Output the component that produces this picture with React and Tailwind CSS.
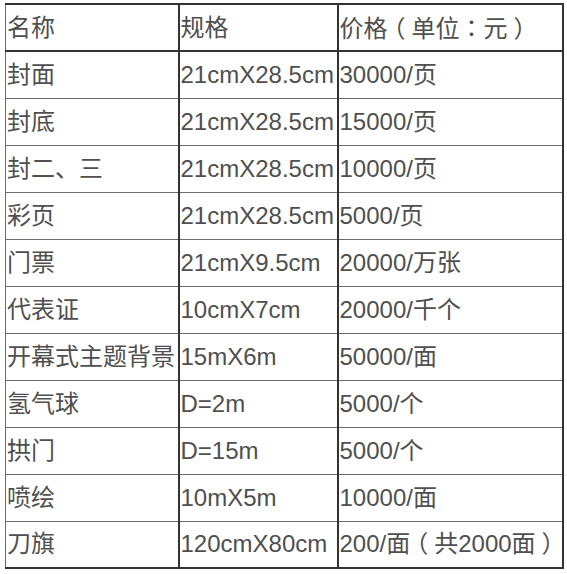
import React from 'react';

const P = ({ children }) => (
  <span className="font-['Noto_Sans_CJK_TC',sans-serif]">{children}</span>
);
// fullwidth parens drawn centred in their box, like the original font
const Tight = ({ children }) => <span className="tracking-[-6px]">{children}</span>;
const Wide = ({ children }) => <span className="tracking-[6px]">{children}</span>;

const rows = [
  ['封面', '21cmX28.5cm', '30000/页'],
  ['封底', '21cmX28.5cm', '15000/页'],
  ['封二、三', '21cmX28.5cm', '10000/页'],
  ['彩页', '21cmX28.5cm', '5000/页'],
  ['门票', '21cmX9.5cm', '20000/万张'],
  ['代表证', '10cmX7cm', '20000/千个'],
  ['开幕式主题背景', '15mX6m', '50000/面'],
  ['氢气球', 'D=2m', '5000/个'],
  ['拱门', 'D=15m', '5000/个'],
  ['喷绘', '10mX5m', '10000/面'],
  ['刀旗', '120cmX80cm', <>200/<Tight>面</Tight><Wide>（</Wide>共2000<Wide>面</Wide><Tight>）</Tight></>],
];

const cell = 'border border-[#6b6b6b] h-[47px] p-0 pl-[1px] align-middle whitespace-nowrap';

export default function App() {
  return (
    <div className="bg-white w-[567px] h-[574px] pt-[3px] pl-[5px] text-[24px] leading-none text-[#4f4f4f] font-['Liberation_Sans','Noto_Sans_CJK_SC',sans-serif]">
      <table className="border-collapse w-[557px] table-fixed border-t-2 border-b-2 border-t-[#333] border-b-[#333]">
        <colgroup>
          <col className="w-[173px]" />
          <col className="w-[159px]" />
          <col className="w-[225px]" />
        </colgroup>
        <tbody>
          <tr className="border-b-2 border-b-[#333]">
            <td className={cell}>名称</td>
            <td className={cell + ' border-l-2 border-l-[#333]'}>规格</td>
            <td className={cell + ' border-l-2 border-l-[#333] border-r-2 border-r-[#333]'}>
              价<Tight>格</Tight><Wide>（</Wide>单位<P>：</P><Wide>元</Wide><Tight>）</Tight>
            </td>
          </tr>
          {rows.map((r, i) => (
            <tr key={i}>
              <td className={cell}>{r[0]}</td>
              <td className={cell + ' border-l-2 border-l-[#333]'}>{r[1]}</td>
              <td className={cell + ' border-l-2 border-l-[#333] border-r-2 border-r-[#333]'}>{r[2]}</td>
            </tr>
          ))}
        </tbody>
      </table>
    </div>
  );
}
